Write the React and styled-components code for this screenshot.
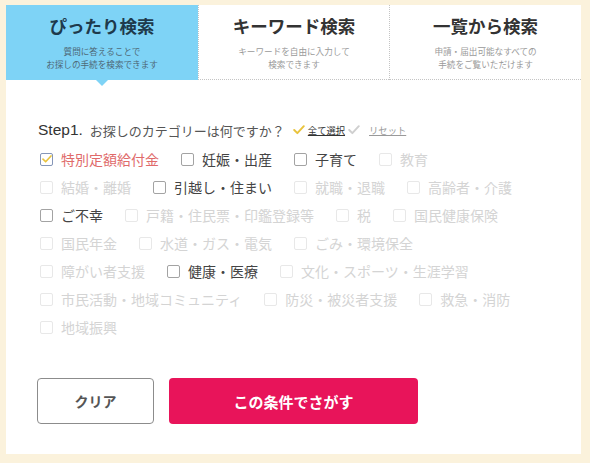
import React from "react";
import styled, { createGlobalStyle } from "styled-components";

const Global = createGlobalStyle`
  html, body { margin: 0; padding: 0; background: #fbf2dc; }
  body { font-family: "Noto Sans CJK JP", "Noto Sans", sans-serif; }
`;

const Page = styled.div`
  width: 590px;
  height: 463px;
  padding: 5px 0 0 6px;
  box-sizing: border-box;
  background: #fbf2dc;
  overflow: hidden;
`;

const Panel = styled.div`
  width: 575px;
  height: 449px;
  background: #fff;
  display: flex;
  flex-direction: column;
  overflow: hidden;
`;

const Tabs = styled.div`
  display: grid;
  grid-template-columns: 192px 191px 192px;
  height: 75px;
  flex: none;
`;

const Tab = styled.div`
  position: relative;
  background: ${(p) => (p.$active ? "#7ed3f6" : "#fff")};
  border-left: ${(p) => (p.$first ? "none" : "1px dotted #c4c4c4")};
  border-bottom: ${(p) => (p.$active ? "none" : "1px dotted #c4c4c4")};
  display: flex;
  flex-direction: column;
  align-items: center;
  padding-top: 8px;
  box-sizing: border-box;
  &::after {
    content: "";
    display: ${(p) => (p.$active ? "block" : "none")};
    position: absolute;
    left: 50%;
    bottom: -6px;
    margin-left: -6px;
    border-left: 6px solid transparent;
    border-right: 6px solid transparent;
    border-top: 6px solid #7ed3f6;
  }
`;

const TabTitle = styled.div`
  font-size: 17.5px;
  font-weight: 700;
  line-height: 26px;
  color: ${(p) => (p.$active ? "#1e3a4c" : "#333")};
`;

const TabSub = styled.div`
  margin-top: 6px;
  font-size: 8.6px;
  line-height: 13px;
  text-align: center;
  color: ${(p) => (p.$active ? "#4f6a78" : "#9a9a9a")};
`;

const Body = styled.div`
  padding: 42px 0 0 32px;
  display: flex;
  flex-direction: column;
`;

const StepLine = styled.div`
  display: flex;
  align-items: center;
  height: 16px;
  color: #555;
  font-size: 13px;
`;

const StepLabel = styled.span`
  font-family: "Liberation Sans", Arial, sans-serif;
  font-size: 15.5px;
  color: #333;
  margin-right: 7px;
`;

const SmallLink = styled.a`
  display: inline-flex;
  align-items: center;
  gap: 3px;
  font-size: 9.3px;
  color: ${(p) => (p.$muted ? "#999" : "#333")};
  text-decoration: underline;
  margin-left: ${(p) => (p.$first ? "8px" : "3px")};
`;

const List = styled.div`
  margin-top: 7px;
  display: flex;
  flex-wrap: wrap;
  width: 495px;
`;

const Item = styled.label`
  display: flex;
  align-items: center;
  height: 28px;
  margin-left: 2px;
  margin-right: 20px;
  font-size: 14px;
  color: ${(p) => (p.$disabled ? "#d4d4d4" : p.$checked ? "#e06a6a" : "#444")};
`;

const Box = styled.span`
  width: 11px;
  height: 11px;
  border: 1px solid
    ${(p) => (p.$disabled ? "#e8e8e8" : p.$checked ? "#8596b8" : "#a3a3a3")};
  border-radius: 2px;
  margin-right: 8px;
  display: flex;
  align-items: center;
  justify-content: center;
  background: #fff;
`;

const Buttons = styled.div`
  margin-top: 37px;
  margin-left: -1px;
  display: flex;
  gap: 15px;
`;

const ClearBtn = styled.button`
  width: 117px;
  height: 46px;
  border: 1px solid #8c8c8c;
  border-radius: 4px;
  background: #fff;
  color: #555;
  font-family: inherit;
  font-size: 14px;
  font-weight: 700;
`;

const SearchBtn = styled.button`
  width: 249px;
  height: 46px;
  border: none;
  border-radius: 4px;
  background: #e8145a;
  color: #fff;
  font-family: inherit;
  font-size: 15px;
  font-weight: 700;
`;

const Check = ({ color, size = 12 }) => (
  <svg width={size} height={size * 0.8} viewBox="0 0 12 10">
    <path d="M1 5.2 L4.3 8.5 L11 1.2" fill="none" stroke={color} strokeWidth="2" strokeLinecap="round" strokeLinejoin="round" />
  </svg>
);

const items = [
  { t: "特別定額給付金", c: true },
  { t: "妊娠・出産" },
  { t: "子育て" },
  { t: "教育", d: true },
  { t: "結婚・離婚", d: true },
  { t: "引越し・住まい" },
  { t: "就職・退職", d: true },
  { t: "高齢者・介護", d: true },
  { t: "ご不幸" },
  { t: "戸籍・住民票・印鑑登録等", d: true },
  { t: "税", d: true },
  { t: "国民健康保険", d: true },
  { t: "国民年金", d: true },
  { t: "水道・ガス・電気", d: true },
  { t: "ごみ・環境保全", d: true },
  { t: "障がい者支援", d: true },
  { t: "健康・医療" },
  { t: "文化・スポーツ・生涯学習", d: true },
  { t: "市民活動・地域コミュニティ", d: true },
  { t: "防災・被災者支援", d: true },
  { t: "救急・消防", d: true },
  { t: "地域振興", d: true },
];

const tabs = [
  { title: "ぴったり検索", sub: ["質問に答えることで", "お探しの手続を検索できます"], active: true },
  { title: "キーワード検索", sub: ["キーワードを自由に入力して", "検索できます"] },
  { title: "一覧から検索", sub: ["申請・届出可能なすべての", "手続をご覧いただけます"] },
];

export default function App() {
  return (
    <Page>
      <Global />
      <Panel>
        <Tabs>
          {tabs.map((tb, i) => (
            <Tab key={tb.title} $active={tb.active} $first={i === 0}>
              <TabTitle $active={tb.active}>{tb.title}</TabTitle>
              <TabSub $active={tb.active}>
                {tb.sub[0]}
                <br />
                {tb.sub[1]}
              </TabSub>
            </Tab>
          ))}
        </Tabs>
        <Body>
          <StepLine>
            <StepLabel>Step1.</StepLabel>
            お探しのカテゴリーは何ですか？
            <SmallLink $first>
              <Check color="#e9c33c" />
              全て選択
            </SmallLink>
            <SmallLink $muted>
              <Check color="#cfcfcf" />
              <span style={{ marginLeft: 6 }}>リセット</span>
            </SmallLink>
          </StepLine>
          <List>
            {items.map((it) => (
              <Item key={it.t} $disabled={it.d} $checked={it.c}>
                <Box $disabled={it.d} $checked={it.c}>
                  {it.c && <Check color="#e9c33c" size={10} />}
                </Box>
                {it.t}
              </Item>
            ))}
          </List>
          <Buttons>
            <ClearBtn>クリア</ClearBtn>
            <SearchBtn>この条件でさがす</SearchBtn>
          </Buttons>
        </Body>
      </Panel>
    </Page>
  );
}
